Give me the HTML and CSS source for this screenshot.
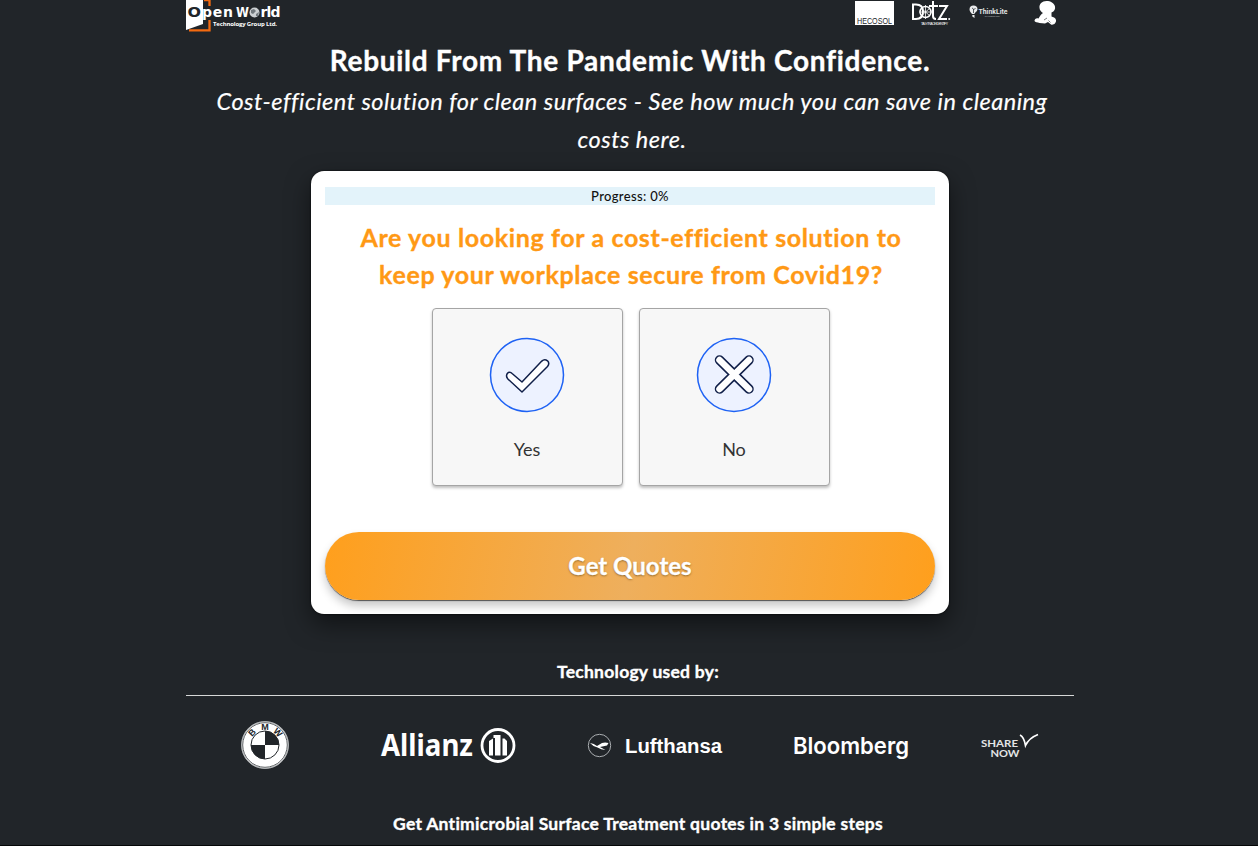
FILE: index.html
```html
<!DOCTYPE html>
<html lang="en">
<head>
<meta charset="utf-8">
<title>Open World Technology Group</title>
<link rel="stylesheet" href="styles.css">
</head>
<body>
<div class="page">
  <header class="header">
    <svg class="brand" width="98" height="32" viewBox="0 0 98 32">
      <path d="M0 0H17V24L0 30Z" fill="#fff"/>
      <path d="M18 0H23.500V6M23.500 20V30.300H3" fill="none" stroke="#f36a10" stroke-width="2.300"/>
      <text x="1.500" y="17" class="brand-name brand-dark" textLength="13.500" lengthAdjust="spacingAndGlyphs">O</text>
      <text x="16" y="17" class="brand-name" textLength="31">pen</text>
      <text x="50" y="17" class="brand-name" textLength="13" lengthAdjust="spacingAndGlyphs">W</text>
      <circle cx="68.500" cy="12.500" r="5" fill="#ccd0d3"/>
      <path d="M65 10l3-1 2 2-3 3-2-1M70 14l3-2-1 4-2 0M69 8l3 1" fill="#71787d"/>
      <text x="74.500" y="17" class="brand-name" textLength="20">rld</text>
      <text x="27" y="26" class="brand-sub" textLength="64">Technology Group Ltd.</text>
    </svg>
    <div class="partners">
      <svg width="39" height="25" viewBox="0 0 39 25">
        <path d="M0 1H39V25H0Z" fill="#fff"/>
        <text x="2" y="23.500" class="hecosol" textLength="35" lengthAdjust="spacingAndGlyphs">HECOSOL</text>
      </svg>
      <svg width="40" height="26" viewBox="0 0 40 26">
        <g fill="none" stroke="#fff" stroke-width="2">
          <path d="M2 4.500V19H5C10 19 12 16 12 11.500S10 4.500 5 4.500ZM22 1V16Q22 19 25 19M18 6H27M28 6H36L28 19H36"/>
          <circle cx="14.500" cy="12" r="5.500" stroke-width="1.500"/>
          <path d="M14.500 5V19M8 12H21M10 8l9 8M10 16l9-8" stroke-width=".8"/>
        </g>
        <circle cx="38.200" cy="19" r="1" fill="#fff"/>
        <text x="10" y="25" class="micro" textLength="27">TAG·TRACE·IDENTIFY</text>
      </svg>
      <svg class="think" width="40" height="20" viewBox="0 0 40 20">
        <path d="M4.500 1.500C2 1.500 .5 3 .5 5.500C.5 7.500 2 8.500 3 10H5.500C6 8 8.500 7.500 8.500 5C8.500 3 7 1.500 4.500 1.500ZM3.300 11H5.500V14L3.300 12.500Z" fill="#e9ebec"/>
        <path d="M4.500 9V5L3 4M4.500 6L6.500 4" fill="none" stroke="#30353a" stroke-width=".8"/>
        <text x="9.500" y="10" class="thinklite" textLength="29" lengthAdjust="spacingAndGlyphs">ThinkLite</text>
        <text x="15" y="13" class="micro micro-dim" textLength="16">ADVANCED LIGHTING</text>
      </svg>
      <svg class="baby" width="24" height="26" viewBox="0 0 24 26">
        <path d="M12.500 1C8 1 5 4 5.500 8C5.700 10.500 7.500 12 9 13C7 14 6 16 4.500 18.500C2.500 17.500 .5 19 .5 21C1 22.500 3.500 22 5.500 23L11 23.500L14 22L17 24.500C19.500 25.500 22.500 23 22 20C21.500 17.500 19 17 17.500 16.500V12.500C20.500 11.500 21.500 9 21 6.500C20.200 3 16.500 1 12.500 1Z" fill="#fff"/>
        <path d="M10 20L13 18M14.500 20.500L16.500 22.500" fill="none" stroke="#212529" stroke-width=".6"/>
      </svg>
    </div>
  </header>

  <h1 class="title">Rebuild From The Pandemic With Confidence.</h1>
  <p class="tagline">Cost-efficient solution for clean surfaces - See how much you can save in cleaning<br>costs here.</p>

  <main class="card">
    <div class="progress">Progress: 0%</div>
    <h2 class="question">Are you looking for a cost-efficient solution to<br>keep your workplace secure from Covid19?</h2>
    <div class="options">
      <div class="option">
        <svg width="76" height="76" viewBox="0 0 76 76">
          <circle cx="38" cy="38" r="36.500" fill="#edf2ff" stroke="#1e62f4" stroke-width="1.500"/>
          <path d="M23.400 36.700Q20.500 34 18.300 36.500Q16.500 39.300 18.900 42L33 55L58.500 29.500Q61 26.500 58.500 23.800Q55.500 21.500 52.800 24.100L33 45Z" fill="#fff" stroke="#101f49" stroke-width="1.500" stroke-linejoin="round"/>
        </svg>
        <span class="option-label">Yes</span>
      </div>
      <div class="option">
        <svg width="76" height="76" viewBox="0 0 76 76">
          <circle cx="38" cy="38" r="36.500" fill="#edf2ff" stroke="#1e62f4" stroke-width="1.500"/>
          <g fill="none" stroke-linecap="round">
            <path d="M23.500 23L53 52M53 23L23.500 52" stroke="#101f49" stroke-width="9.500"/>
            <path d="M23.500 23L53 52M53 23L23.500 52" stroke="#fff" stroke-width="6.500"/>
          </g>
        </svg>
        <span class="option-label">No</span>
      </div>
    </div>
    <button class="cta">Get Quotes</button>
  </main>

  <h3 class="used-by">Technology used by:</h3>
  <div class="clients">
    <svg class="roundel" width="50" height="50" viewBox="0 0 50 50">
      <circle cx="25" cy="25" r="23.500" fill="#fff" stroke="#aeb1b3"/>
      <circle cx="25" cy="25" r="22.300" fill="none" stroke="#33383c" stroke-width=".8"/>
      <circle cx="25" cy="25" r="14" fill="#fff" stroke="#212529" stroke-width="1"/>
      <path d="M25 25V11A14 14 0 0 1 39 25ZM25 25V39A14 14 0 0 1 11 25Z" fill="#212529"/>
      <text class="bmw" text-anchor="middle" x="25" y="10" transform="rotate(-46 25 25)">B</text>
      <text class="bmw" text-anchor="middle" x="25" y="10">M</text>
      <text class="bmw" text-anchor="middle" x="25" y="10" transform="rotate(46 25 25)">W</text>
    </svg>
    <svg class="allianz" width="136" height="38" viewBox="0 0 136 38">
      <text class="allianz-name" x="1" y="29" textLength="92" lengthAdjust="spacingAndGlyphs">Allianz</text>
      <circle cx="118" cy="18.500" r="16" fill="none" stroke="#fff" stroke-width="2.800"/>
      <path d="M109 28.500V14L113 11.500V28.500ZM115 28.500V11H113.500V8H120.500V28.500ZM122.500 28.500V11.500H124.500L127 14V28.500Z" fill="#fff"/>
    </svg>
    <svg class="lufthansa" width="136" height="30" viewBox="0 0 136 30">
      <circle cx="12.500" cy="14.500" r="11.200" fill="none" stroke="#a9adb0"/>
      <path d="M3 12Q7 12.500 10 15L15 12Q18 11 21.500 12L20 14.500L13 16L18.500 19Q14 18.500 10.500 16.500Q6 15.500 3 12Z" fill="#fff"/>
      <text class="lufthansa-name" x="38" y="22" textLength="97" lengthAdjust="spacingAndGlyphs">Lufthansa</text>
    </svg>
    <svg class="bloomberg" width="118" height="36" viewBox="0 0 118 36">
      <text class="bloomberg-name" x="0" y="26" textLength="116" lengthAdjust="spacingAndGlyphs">Bloomberg</text>
    </svg>
    <svg class="share" width="60" height="30" viewBox="0 0 60 30">
      <text class="share-name" x="0" y="16" textLength="37" lengthAdjust="spacingAndGlyphs">SHARE</text>
      <text class="share-name" x="9.500" y="25.500" textLength="29" lengthAdjust="spacingAndGlyphs">NOW</text>
      <path d="M39 4Q43 6 44.500 14.500Q48 7 57 3.500" fill="none" stroke="#fff" stroke-width="1.700"/>
    </svg>
  </div>
  <h3 class="steps">Get Antimicrobial Surface Treatment quotes in 3 simple steps</h3>
</div>
</body>
</html>
```
FILE: styles.css
```css
* { box-sizing: border-box; }
body {
  margin: 0;
  height: 846px;
  overflow: hidden;
  background: #212529;
  border-bottom: 1px solid #050708;
  color: #fff;
  font-family: Lato, "Noto Sans", sans-serif;
}
svg { display: block; flex: none; overflow: visible; }
h1, h2, h3, p { margin: 0; white-space: nowrap; }
h1, h2, h3, .cta { -webkit-text-stroke: .35px currentColor; }
.page { width: 888px; margin-left: 186px; }
.header { display: flex; justify-content: space-between; height: 41px; padding-right: 16px; }
.partners { display: flex; gap: 17px; }
.partners .think { margin: 4px -1px 0 1px; }
.partners .baby { margin-left: 9px; }
.brand-name { font: 700 14px "DejaVu Sans", sans-serif; fill: #fff; }
.brand-dark { fill: #212529; }
.brand-sub { font: 700 6px "Open Sans", sans-serif; fill: #fff; }
.hecosol { font: 9px "Liberation Sans", sans-serif; fill: #212529; }
.micro { font: 3.500px "Liberation Sans", sans-serif; fill: #fff; }
.micro-dim { font-size: 2.500px; fill: #8f9497; }
.thinklite { font: 700 7.500px Roboto, sans-serif; fill: #e0e2e3; }

.title { text-align: center; font-size: 28px; line-height: 38px; font-weight: 700; letter-spacing: .7px; }
.tagline { height: 92px; padding: 3px 0 0 4px; text-align: center; font-size: 23.500px; line-height: 38px; font-style: italic; letter-spacing: .5px; -webkit-text-stroke: .2px currentColor; }

.card {
  width: 638px;
  height: 443px;
  margin: 0 auto;
  padding: 16px 14px 14px;
  display: flex;
  flex-direction: column;
  background: #fff;
  border-radius: 13px;
  box-shadow: 0 0 2px #000, 0 10px 24px rgba(0, 0, 0, .5);
}
.progress { height: 18px; background: #e3f3fa; color: #111; text-align: center; font: 500 13px/19px Lato, sans-serif; letter-spacing: .35px; }
.question { margin-top: 14px; padding-left: 2px; color: #ff9915; text-align: center; font-size: 25px; line-height: 37px; letter-spacing: .63px; }
.options { display: flex; justify-content: center; gap: 16px; margin-top: 15px; padding-left: 2px; }
.option {
  width: 191px;
  height: 178px;
  padding: 28px 1px 0 0;
  display: flex;
  flex-direction: column;
  align-items: center;
  gap: 24px;
  background: #f7f7f7;
  border: 1px solid #a5a5a5;
  border-radius: 4px;
  box-shadow: 0 2px 3px rgba(0, 0, 0, .25);
}
.option-label { color: #333; font-size: 18px; line-height: 24px; }
.cta {
  height: 68px;
  margin-top: auto;
  padding: 0 0 2px;
  border: 0;
  border-radius: 34px;
  background: linear-gradient(100deg, #ff9f1c, #eeaf5d 50%, #ff9f1c);
  box-shadow: 0 1px 1px rgba(0, 0, 0, .6), 0 6px 10px rgba(0, 0, 0, .22);
  color: #fff;
  font: 700 24px Lato, sans-serif;
  text-shadow: 0 1px 2px rgba(80, 50, 0, .6);
}
.used-by { height: 82px; padding: 46px 0 0 16px; border-bottom: 1px solid #d6d7d7; text-align: center; font-size: 17.500px; line-height: 24px; letter-spacing: .25px; }
.clients { height: 99px; display: flex; align-items: center; padding-left: 54px; }
.roundel { margin-top: -1px; }
.bmw { font: 700 9px "Liberation Sans", sans-serif; fill: #212529; }
.allianz { margin-left: 90px; }
.allianz-name { font: 700 31px "Noto Sans", sans-serif; fill: #fff; }
.lufthansa { margin-left: 71px; }
.lufthansa-name { font: 700 20px "Liberation Sans", sans-serif; fill: #fff; }
.bloomberg { margin-left: 70px; }
.bloomberg-name { font: 600 23px Inter, sans-serif; fill: #fff; }
.share { margin-left: 70px; }
.share-name { font: 700 9.500px Lato, sans-serif; fill: #e4e5e6; }
.steps { margin-top: 17px; text-align: center; font-size: 17.500px; line-height: 24px; letter-spacing: .28px; padding-left: 16px; }
```
